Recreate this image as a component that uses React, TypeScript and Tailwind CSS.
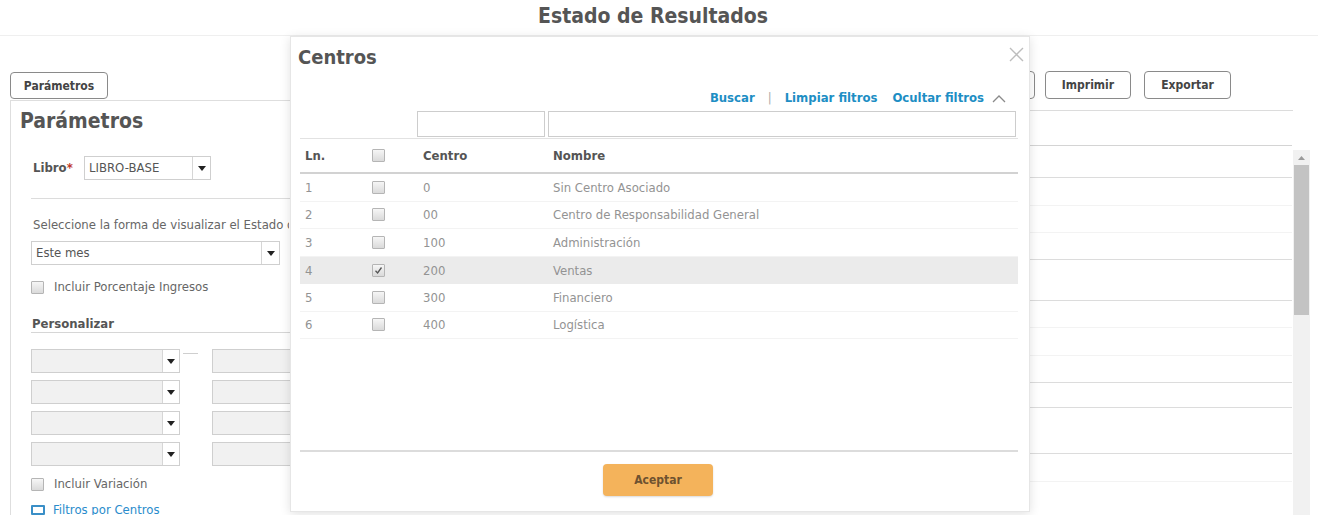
import React from "react";

const rows = [
  { ln: 1, centro: "0", nombre: "Sin Centro Asociado", checked: false },
  { ln: 2, centro: "00", nombre: "Centro de Responsabilidad General", checked: false },
  { ln: 3, centro: "100", nombre: "Administración", checked: false },
  { ln: 4, centro: "200", nombre: "Ventas", checked: true },
  { ln: 5, centro: "300", nombre: "Financiero", checked: false },
  { ln: 6, centro: "400", nombre: "Logística", checked: false },
];

// background grid lines on the right (height, strong border?)
const bgRows: [number, boolean][] = [
  [32, true],
  [28, false],
  [27, false],
  [27, true],
  [41, true],
  [27, false],
  [28, false],
  [27, true],
  [25, true],
  [46, true],
  [28, false],
  [40, false],
];

function Checkbox({ checked = false }: { checked?: boolean }) {
  return (
    <span className="w-[13px] h-[13px] border border-[#b5b5b5] rounded-[1px] bg-gradient-to-b from-[#f6f6f6] to-[#dadada] flex items-center justify-center shrink-0">
      {checked && (
        <svg width="9" height="9" viewBox="0 0 9 9">
          <path d="M1.5 4.8 L3.6 7 L7.5 1.5" fill="none" stroke="#555" strokeWidth="1.3" />
        </svg>
      )}
    </span>
  );
}

function Arrow() {
  return (
    <svg width="8" height="5" viewBox="0 0 8 5">
      <path d="M0 0 H8 L4 5 Z" fill="#222" />
    </svg>
  );
}

function Select({
  value,
  width,
  arrowW = 18,
  disabled = false,
}: {
  value?: string;
  width: string;
  arrowW?: number;
  disabled?: boolean;
}) {
  return (
    <div
      className={`${width} h-[24px] border border-[#cfcfcf] flex shrink-0 ${
        disabled ? "bg-[#f1f1f1]" : "bg-white"
      }`}
    >
      <div className="flex-1 px-[4px] flex items-center text-[13px] text-[#555] overflow-hidden whitespace-nowrap">
        {value}
      </div>
      <div
        className="border-l border-[#d6d6d6] bg-white flex items-center justify-center"
        style={{ width: arrowW }}
      >
        <Arrow />
      </div>
    </div>
  );
}

function ToolButton({ label, width }: { label: string; width: string }) {
  return (
    <button
      className={`${width} h-[28px] border border-[#8a8a8a] rounded-[4px] bg-white text-[12px] font-bold text-[#444]`}
    >
      {label}
    </button>
  );
}

export default function App() {
  return (
    <div className="relative w-[1318px] h-[515px] overflow-hidden bg-white font-['DejaVu_Sans_Condensed','DejaVu_Sans',sans-serif] text-[#555]">
      {/* Title */}
      <div className="h-[36px] border-b border-[#efefef] flex items-center justify-center">
        <h1 className="text-[21px] font-bold text-[#555] leading-none -mt-[3px] -ml-[12px]">Estado de Resultados</h1>
      </div>

      {/* Toolbar */}
      <div className="mt-[35px] h-[28px] flex items-center justify-between pl-[10px] pr-[87px]">
        <button className="w-[98px] h-[27px] mt-[1px] border border-[#8a8a8a] rounded-[4px] bg-white text-[12px] font-bold text-[#444]">
          Parámetros
        </button>
        <div className="flex gap-[10px]">
          <ToolButton label="Consultar" width="w-[85px]" />
          <div className="flex gap-[13px]">
            <ToolButton label="Imprimir" width="w-[86px]" />
            <ToolButton label="Exportar" width="w-[87px]" />
          </div>
        </div>
      </div>

      {/* Main */}
      <div className="flex mt-[1px]">
        {/* Left panel */}
        <div className="ml-[10px] w-[500px] border-l border-t border-[#dedede] h-[420px]">
          <h2 className="pl-[9px] pt-[8px] text-[21px] leading-[24px] font-bold text-[#555]">Parámetros</h2>
          <div className="pl-[20px]">
            <div className="mt-[23px] flex items-center pb-[18px] border-b border-[#dcdcdc]">
              <span className="pl-[2px] w-[53px] text-[13px] font-bold text-[#555]">
                Libro<span className="text-[#c0392b]">*</span>
              </span>
              <Select value="LIBRO-BASE" width="w-[127px]" />
            </div>
            <p className="mt-[18px] w-[258px] overflow-hidden text-[13px] leading-[16px] text-[#666] pl-[2px] whitespace-nowrap">
              Seleccione la forma de visualizar el Estado de Resultados
            </p>
            <div className="mt-[8px]">
              <Select value="Este mes" width="w-[249px]" />
            </div>
            <label className="mt-[14px] flex items-center gap-[10px] h-[16px]">
              <Checkbox />
              <span className="text-[13px] text-[#666]">Incluir Porcentaje Ingresos</span>
            </label>
            <div className="mt-[21px] border-b border-[#d6d6d6] pb-0">
              <span className="text-[13px] leading-[16px] font-bold text-[#555] pl-[1px] block">Personalizar</span>
            </div>
            <div className="mt-[16px] flex flex-col gap-[7px]">
              {[0, 1, 2, 3].map((i) => (
                <div key={i} className="flex items-center">
                  <Select width="w-[149px]" arrowW={17} disabled />
                  <div className="w-[32px] flex">
                    {i === 0 && <span className="ml-[3px] -mt-[8px] w-[15px] h-px bg-[#cfcfcf]" />}
                  </div>
                  <div className="w-[160px] h-[24px] border border-[#cfcfcf] bg-[#f1f1f1]" />
                </div>
              ))}
            </div>
            <label className="mt-[10px] flex items-center gap-[10px] h-[16px]">
              <Checkbox />
              <span className="text-[13px] text-[#666]">Incluir Variación</span>
            </label>
            <div className="mt-[10px] flex items-center gap-[8px] h-[16px]">
              <span className="w-[14px] h-[10px] border-2 border-[#3a8fc7] rounded-[1px]" />
              <span className="text-[13px] text-[#2a8ccc]">Filtros por Centros</span>
            </div>
          </div>
        </div>

        {/* Right panel */}
        <div className="flex-1 mr-[8px] pt-[10px]">
          <div className="border-t border-[#dcdcdc] mr-[17px]" />
          <div className="mt-[34px] flex">
            <div className="flex-1 border-t border-[#d4d4d4]">
              {bgRows.map(([h, strong], i) => (
                <div
                  key={i}
                  className={strong ? "border-b border-[#dcdcdc]" : "border-b border-[#f3f3f3]"}
                  style={{ height: h }}
                />
              ))}
            </div>
            <div className="w-[17px] ml-[1px] mt-[5px] bg-[#f1f1f1] flex flex-col items-center">
              <svg width="7" height="4" viewBox="0 0 7 4" className="mt-[6px]">
                <path d="M0 4 L3.5 0 L7 4 Z" fill="#9a9a9a" />
              </svg>
              <div className="mt-[5px] w-[15px] h-[150px] bg-[#c3c3c3]" />
            </div>
          </div>
        </div>
      </div>

      {/* Centros modal */}
      <div className="absolute left-[290px] top-[36px] w-[740px] h-[476px] bg-white border border-[#e6e6e6] shadow-[0_2px_10px_rgba(0,0,0,0.12)] flex flex-col pl-[9px] pr-[11px]">
        <button className="absolute right-[5px] top-[10px] w-[15px] h-[15px]">
          <svg width="15" height="15" viewBox="0 0 15 15">
            <path d="M1 1 L14 14 M14 1 L1 14" stroke="#bdbdbd" strokeWidth="1.4" />
          </svg>
        </button>
        <div className="h-[40px] flex items-center">
          <h3 className="text-[20px] leading-none font-bold text-[#555] -mt-[1px] -ml-[2px]">Centros</h3>
        </div>
        <div className="h-[34px] pt-[14px] flex justify-end items-start pr-[12px] text-[13px] leading-[14px] font-bold text-[#1d8ec4]">
          <span>Buscar</span>
          <span className="mx-[13px] font-normal text-[#aaa]">|</span>
          <span>Limpiar filtros</span>
          <span className="ml-[15px]">Ocultar filtros</span>
          <svg width="14" height="9" viewBox="0 0 14 9" className="ml-[8px] mt-[3px]">
            <path d="M1 8 L7 2 L13 8" fill="none" stroke="#8a8a8a" strokeWidth="1.3" />
          </svg>
        </div>
        <div className="h-[26px] flex gap-[3px] pl-[117px] pr-[2px]">
          <input className="w-[128px] h-[26px] border border-[#cdcdcd] outline-none" />
          <input className="flex-1 h-[26px] border border-[#cdcdcd] outline-none" />
        </div>

        <div className="mt-[1px] flex-1 border-t border-[#e2e2e2]">
          <div className="h-[35px] flex items-center border-b-2 border-[#d2d2d2] text-[13px] font-bold text-[#555]">
            <span className="w-[72px] pl-[5px]">Ln.</span>
            <span className="w-[51px]">
              <Checkbox />
            </span>
            <span className="w-[130px]">Centro</span>
            <span>Nombre</span>
          </div>
          {rows.map((r) => (
            <div
              key={r.ln}
              className={`h-[27.5px] flex items-center text-[13px] text-[#939393] ${
                r.checked ? "bg-[#ebebeb]" : "border-b border-[#f3f3f3]"
              }`}
            >
              <span className="w-[72px] pl-[5px]">{r.ln}</span>
              <span className="w-[51px]">
                <Checkbox checked={r.checked} />
              </span>
              <span className="w-[130px]">{r.centro}</span>
              <span>{r.nombre}</span>
            </div>
          ))}
        </div>

        <div className="border-t-2 border-[#dcdcdc] h-[61px] pt-[12px] flex justify-center">
          <button className="w-[110px] h-[32px] rounded-[4px] bg-[#f4b35b] text-[12px] font-bold text-[#6e5230] shadow-[0_1px_2px_rgba(0,0,0,0.15)] -ml-[2px]">
            Aceptar
          </button>
        </div>
      </div>
    </div>
  );
}
